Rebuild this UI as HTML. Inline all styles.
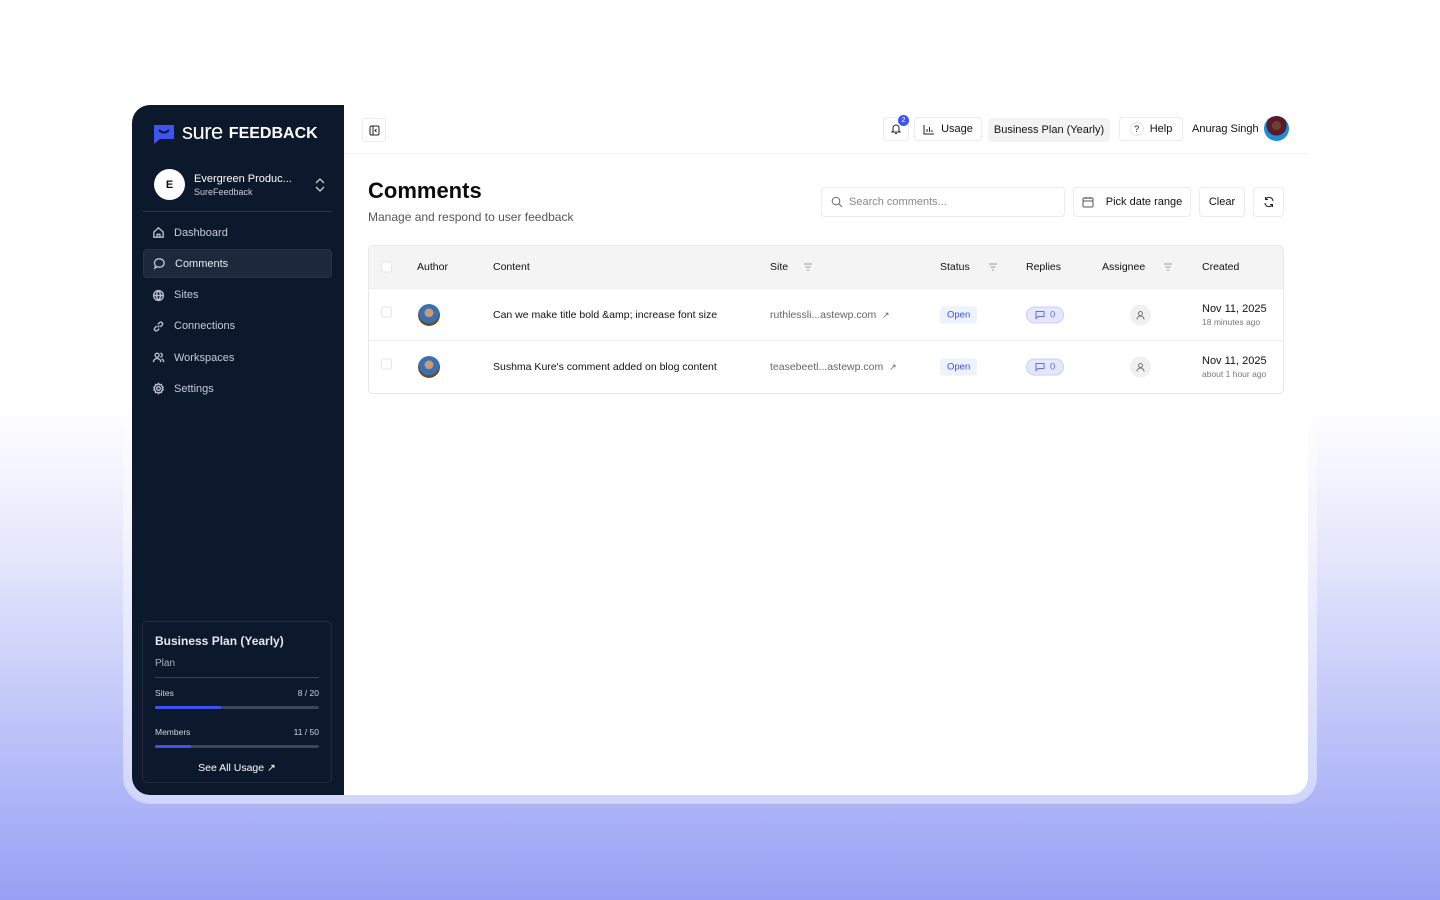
<!DOCTYPE html>
<html><head><meta charset="utf-8"><style>
*{box-sizing:border-box;margin:0;padding:0}
body{width:1440px;height:900px;overflow:hidden;font-family:"Liberation Sans",sans-serif;background:linear-gradient(180deg,#fff 0%,#fff 45%,#e4e6fb 62%,#b5bcf8 85%,#98a0f4 100%);position:relative}
.frame{position:absolute;left:124px;top:97px;width:1192px;height:706px;border-radius:26px;background:rgba(255,255,255,.45);box-shadow:0 0 0 1px rgba(255,255,255,.4)}
.app{position:absolute;left:132px;top:105px;width:1176px;height:690px;border-radius:18px;background:#fff;overflow:hidden}
.side{position:absolute;left:0;top:0;width:212px;height:690px;background:#0c182b;color:#d5dae3}
.logo{position:absolute;left:20px;top:18px;display:flex;align-items:center;gap:6px;color:#fff}
.org{position:absolute;left:22px;top:64px;width:180px;display:flex;align-items:center}
.av{width:31px;height:31px;border-radius:50%;background:#fff;color:#111;font-size:11px;font-weight:bold;display:flex;align-items:center;justify-content:center}
.sep{position:absolute;left:11px;top:106px;width:189px;height:1px;background:#2b3748}
.nav{position:absolute;left:11px;top:113px;width:189px}
.ni{height:29px;margin-bottom:2.3px;display:flex;align-items:center;padding-left:9px;font-size:11px;color:#c5cbd6;gap:9px;border-radius:4px}
.ni.act{background:#1c283b;border:1px solid #26324a;color:#e8ebf0}
.ni svg{width:13px;height:13px;stroke:#b7bfcb;fill:none;stroke-width:1.5}
.plan{position:absolute;left:10px;top:516px;width:190px;height:162px;border:1px solid #202c3e;border-radius:5px;padding:12px 12px;color:#e6e9ee}
.bar{height:3px;background:#3b4656;border-radius:2px;margin-top:8px;position:relative}
.bar i{position:absolute;left:0;top:0;height:3px;background:#3d53f0;border-radius:2px}
.top{position:absolute;left:212px;top:0;right:0;height:49px;border-bottom:1px solid #eef0f2}
.btn{position:absolute;height:24px;border:1px solid #e8eaee;border-radius:4px;font-size:11px;color:#111;display:flex;align-items:center;justify-content:center;gap:6px;background:#fff}
.h1{position:absolute;left:236px;top:73px;font-size:22px;font-weight:bold;color:#0b0b0b}
.sub{position:absolute;left:236px;top:105px;font-size:12px;color:#555}
.tbl{position:absolute;left:236px;top:140px;width:916px;height:149px;border:1px solid #e6e8ec;border-radius:5px;overflow:hidden;font-size:10.5px;color:#111}
.th{height:43px;background:#f4f4f5;border-bottom:1px solid #eceef1;position:relative}
.row{height:52px;border-bottom:1px solid #eceef1;position:relative}
.c{position:absolute;top:50%;transform:translateY(-50%);white-space:nowrap}
.cb{width:11px;height:11px;border:1px solid #e3e5e9;border-radius:3px;background:#fff}
.ph{width:22px;height:22px;border-radius:50%;background:radial-gradient(circle at 50% 40%,#c99a7a 0 25%,#3a6fb0 26% 60%,#6b4a2a 61%)}
.open{background:#eef2fe;color:#3550e8;font-size:9.5px;padding:3px 7px;border-radius:3px}
.rep{background:#e4e7fd;border:1px solid #c8cefa;color:#5a6ff0;font-size:9.5px;padding:2px 8px;border-radius:10px;display:flex;gap:5px;align-items:center}
.asg{width:21px;height:21px;border-radius:50%;background:#f0f0f1;display:flex;align-items:center;justify-content:center}
.fil{stroke:#aaa;stroke-width:1.2}
</style></head><body>
<div class="frame"></div>
<div class="app">
<div class="side">
<div class="logo"><svg width="24" height="22" viewBox="0 0 24 22"><path d="M2 2h20v14H8l-6 5z" fill="#3d55f0"/><path d="M7 7q5 5 10 0" stroke="#0c182b" stroke-width="2" fill="none"/></svg><span style="font-size:22px;letter-spacing:-.5px;margin-top:-4px">sure</span><span style="font-size:16px;font-weight:bold">FEEDBACK</span></div>
<div class="org"><div class="av">E</div><div style="margin-left:9px;flex:1"><div style="font-size:11px;color:#fff">Evergreen Produc...</div><div style="font-size:9px;color:#c8ced8;margin-top:2px">SureFeedback</div></div><svg width="12" height="16" viewBox="0 0 12 16" style="margin-right:8px"><path d="M2 6l4-4 4 4M2 10l4 4 4-4" stroke="#c8ced8" fill="none" stroke-width="1.3"/></svg></div>
<div class="sep"></div>
<div class="nav">
<div class="ni"><svg viewBox="0 0 14 14"><path d="M2 6.5L7 2l5 4.5V12H2z M5.5 12V9h3v3"/></svg>Dashboard</div>
<div class="ni act"><svg viewBox="0 0 14 14"><path d="M7 2a5 4.5 0 1 1-2.5 8.4L2 12l.8-2.6A5 4.5 0 0 1 7 2z"/></svg>Comments</div>
<div class="ni"><svg viewBox="0 0 14 14"><circle cx="7" cy="7" r="5.3"/><path d="M1.7 7h10.6M7 1.7c-3 3.5-3 7 0 10.6M7 1.7c3 3.5 3 7 0 10.6"/></svg>Sites</div>
<div class="ni"><svg viewBox="0 0 14 14"><path d="M6 8l2-2M5 6.5l-2 2a2 2 0 0 0 2.8 2.8l2-2M9 7.5l2-2A2 2 0 0 0 8.2 2.7l-2 2"/></svg>Connections</div>
<div class="ni"><svg viewBox="0 0 14 14"><circle cx="5.5" cy="4.5" r="2.2"/><path d="M1.5 12a4 4 0 0 1 8 0M9 2.5a2 2 0 0 1 0 4M10.5 8.5a3.5 3.5 0 0 1 2 3.5"/></svg>Workspaces</div>
<div class="ni"><svg viewBox="0 0 14 14"><circle cx="7" cy="7" r="2"/><path d="M7 1.5l1.2 1.5 1.9-.4.4 1.9 1.5 1.2-1 1.3 1 1.3-1.5 1.2-.4 1.9-1.9-.4L7 12.5 5.8 11l-1.9.4-.4-1.9L2 8.3l1-1.3-1-1.3 1.5-1.2.4-1.9 1.9.4z"/></svg>Settings</div>
</div>
<div class="plan">
<div style="font-size:12px;font-weight:bold">Business Plan (Yearly)</div>
<div style="font-size:10px;color:#a9b1bd;margin-top:10px">Plan</div>
<div style="height:1px;background:#3a4555;margin-top:8px"></div>
<div style="display:flex;justify-content:space-between;font-size:8.5px;margin-top:10px;color:#d0d5dd"><span>Sites</span><span>8 / 20</span></div>
<div class="bar"><i style="width:40%"></i></div>
<div style="display:flex;justify-content:space-between;font-size:8.5px;margin-top:18px;color:#d0d5dd"><span>Members</span><span>11 / 50</span></div>
<div class="bar"><i style="width:22%"></i></div>
<div style="text-align:center;font-size:10.5px;margin-top:14px;color:#fff">See All Usage ↗</div>
</div>
</div>
<div class="top">
<div class="btn" style="left:18px;top:13px;width:24px"><svg width="11" height="11" viewBox="0 0 11 11"><rect x="1" y="1" width="9" height="9" rx="1.5" stroke="#222" fill="none"/><path d="M4 1v9M7.5 4L6 5.5 7.5 7" stroke="#222" fill="none"/></svg></div>
<div class="btn" style="left:539px;top:12px;width:26px"><svg width="12" height="12" viewBox="0 0 12 12"><path d="M3 8V5a3 3 0 0 1 6 0v3l1 1H2zM5 10.5h2" stroke="#222" fill="none"/></svg></div>
<div style="position:absolute;left:554px;top:10px;width:11px;height:11px;border-radius:50%;background:#3d55f0;color:#fff;font-size:7px;display:flex;align-items:center;justify-content:center">2</div>
<div class="btn" style="left:570px;top:12px;width:68px"><svg width="12" height="11" viewBox="0 0 12 11"><path d="M1 1v9h10M4 8V5M6.5 8V3M9 8V6" stroke="#222" fill="none"/></svg>Usage</div>
<div class="btn" style="left:644px;top:13px;width:122px;background:#f3f3f4;border-color:#f3f3f4">Business Plan (Yearly)</div>
<div class="btn" style="left:775px;top:12px;width:64px"><span style="width:14px;height:14px;border:1px solid #e5e5e5;border-radius:50%;font-size:9px;display:flex;align-items:center;justify-content:center">?</span>Help</div>
<div style="position:absolute;left:848px;top:18px;font-size:11px;color:#111">Anurag Singh</div>
<div style="position:absolute;left:920px;top:11px;width:25px;height:25px;border-radius:50%;background:radial-gradient(circle at 50% 38%,#6b4030 0 22%,#5b1a2a 23% 50%,#1a8fd8 51%)"></div>
</div>
<div class="h1">Comments</div>
<div class="sub">Manage and respond to user feedback</div>
<div class="btn" style="left:689px;top:82px;width:244px;height:30px;justify-content:flex-start;padding-left:9px;color:#888"><svg width="12" height="12" viewBox="0 0 12 12"><circle cx="5" cy="5" r="3.8" stroke="#666" fill="none"/><path d="M8 8l3 3" stroke="#666"/></svg>Search comments...</div>
<div class="btn" style="left:941px;top:82px;width:118px;height:30px;gap:12px"><svg width="12" height="12" viewBox="0 0 12 12"><rect x="1" y="2" width="10" height="9" rx="1" stroke="#555" fill="none"/><path d="M1 5h10M4 1v2M8 1v2" stroke="#555"/></svg>Pick date range</div>
<div class="btn" style="left:1067px;top:82px;width:46px;height:30px">Clear</div>
<div class="btn" style="left:1121px;top:82px;width:31px;height:30px"><svg width="12" height="12" viewBox="0 0 12 12"><path d="M10 5A4 4 0 0 0 2.5 3.5M2 7a4 4 0 0 0 7.5 1.5M2.5 1v2.5H5M9.5 11V8.5H7" stroke="#222" fill="none" stroke-width="1.1"/></svg></div>
<div class="tbl">
<div class="th">
<div class="c cb" style="left:12px"></div>
<div class="c" style="left:48px">Author</div>
<div class="c" style="left:124px">Content</div>
<div class="c" style="left:401px">Site</div>
<svg class="c" style="left:434px" width="10" height="8"><path class="fil" d="M1 1h8M2.5 4h5M4 7h2"/></svg>
<div class="c" style="left:571px">Status</div>
<svg class="c" style="left:619px" width="10" height="8"><path class="fil" d="M1 1h8M2.5 4h5M4 7h2"/></svg>
<div class="c" style="left:657px">Replies</div>
<div class="c" style="left:733px">Assignee</div>
<svg class="c" style="left:794px" width="10" height="8"><path class="fil" d="M1 1h8M2.5 4h5M4 7h2"/></svg>
<div class="c" style="left:833px">Created</div>
</div>
<div class="row">
<div class="c cb" style="left:12px;top:45%"></div>
<div class="c ph" style="left:49px"></div>
<div class="c" style="left:124px">Can we make title bold &amp;amp; increase font size</div>
<div class="c" style="left:401px;color:#666">ruthlessli...astewp.com &nbsp;<span style="font-size:9px">↗</span></div>
<div class="c open" style="left:571px">Open</div>
<div class="c rep" style="left:657px"><svg width="10" height="9"><path d="M1 1h8v5H3L1 8z" stroke="#5a6ff0" fill="none"/></svg>0</div>
<div class="c asg" style="left:761px"><svg width="9" height="9"><circle cx="4.5" cy="3" r="2" stroke="#777" fill="none"/><path d="M1 9a3.5 3.5 0 0 1 7 0" stroke="#777" fill="none"/></svg></div>
<div class="c" style="left:833px"><div style="font-size:11px">Nov 11, 2025</div><div style="font-size:8.5px;color:#777;margin-top:2px">18 minutes ago</div></div>
</div>
<div class="row" style="border-bottom:none">
<div class="c cb" style="left:12px;top:45%"></div>
<div class="c ph" style="left:49px"></div>
<div class="c" style="left:124px">Sushma Kure's comment added on blog content</div>
<div class="c" style="left:401px;color:#666">teasebeetl...astewp.com &nbsp;<span style="font-size:9px">↗</span></div>
<div class="c open" style="left:571px">Open</div>
<div class="c rep" style="left:657px"><svg width="10" height="9"><path d="M1 1h8v5H3L1 8z" stroke="#5a6ff0" fill="none"/></svg>0</div>
<div class="c asg" style="left:761px"><svg width="9" height="9"><circle cx="4.5" cy="3" r="2" stroke="#777" fill="none"/><path d="M1 9a3.5 3.5 0 0 1 7 0" stroke="#777" fill="none"/></svg></div>
<div class="c" style="left:833px"><div style="font-size:11px">Nov 11, 2025</div><div style="font-size:8.5px;color:#777;margin-top:2px">about 1 hour ago</div></div>
</div>
</div>
</div>
</body></html>
